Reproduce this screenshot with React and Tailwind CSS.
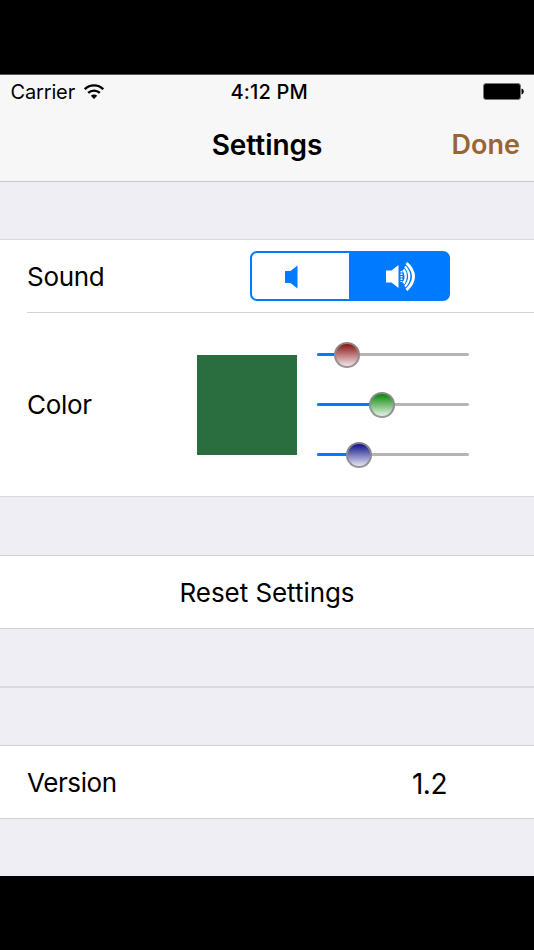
import { useState } from "react";

const CHANNELS = [
  { key: "red", from: "#8b1a1a", to: "#f6ecec", value: 30 },
  { key: "green", from: "#0f8a0f", to: "#ecf6ec", value: 65 },
  { key: "blue", from: "#15158c", to: "#ececf8", value: 42 },
];

function WifiIcon() {
  return (
    <svg width="20" height="15" viewBox="0 0 20 15" fill="none">
      <path d="M0.800 5.200a13 13 0 0 1 18.400 0" stroke="#000" strokeWidth="2.4" />
      <path d="M4.200 8.900a8.400 8.400 0 0 1 11.600 0" stroke="#000" strokeWidth="2.3" />
      <path d="M10 15L6.800 11.800a4.600 4.600 0 0 1 6.400 0z" fill="#000" />
    </svg>
  );
}

function BatteryIcon() {
  return (
    <svg width="41" height="17" viewBox="0 0 41 17">
      <rect x="0.5" y="0.5" width="37" height="16" rx="2.5" fill="#000" stroke="#777" />
      <path d="M38.500 5.500c3 0.500 3 5.500 0 6z" fill="#000" />
    </svg>
  );
}

function SpeakerIcon() {
  return (
    <svg width="13" height="24" viewBox="0 0 13 24" fill="currentColor">
      <path d="M0 6h5.500L12.500 0.500v23L5.500 18H0z" />
    </svg>
  );
}

function SpeakerWavesIcon() {
  return (
    <svg width="30" height="30" viewBox="0 0 30 30" fill="none" stroke="currentColor">
      <path d="M0 9.500h5.500L12.500 4v23L5.500 21.500H0z" fill="currentColor" stroke="none" />
      <path d="M15.500 10v11" strokeWidth="2" strokeDasharray="1.500 1" />
      <path d="M17.500 8.500q4.500 7 0 14" strokeWidth="2.400" />
      <path d="M19 5.500q8.500 10 0 20" strokeWidth="2.200" />
      <path d="M20.500 2q14 13.500 0 27" strokeWidth="3" />
    </svg>
  );
}

function ColorSlider({ channel, value, onChange }) {
  return (
    <div className="relative flex h-[26px] w-[152px] items-center">
      <div className="h-[3px] w-full rounded-full bg-[#b5b5b5]">
        <div className="h-full rounded-full bg-[#007aff]" style={{ width: value }} />
      </div>
      <div
        className="absolute top-0 size-[26px] rounded-full border-2 border-[#8d8d8d]/90"
        style={{
          left: value - 13,
          backgroundImage: `linear-gradient(${channel.from} 10%, ${channel.to} 95%)`,
          backgroundOrigin: "border-box",
        }}
      />
      <input
        type="range"
        min="13"
        max="139"
        value={value}
        aria-label={channel.key}
        onChange={(e) => onChange(Number(e.target.value))}
        className="absolute inset-0 w-full opacity-0"
      />
    </div>
  );
}

export default function App() {
  const [soundOn, setSoundOn] = useState(true);
  const [values, setValues] = useState(CHANNELS.map((c) => c.value));

  const updateChannel = (index, next) => {
    setValues(values.map((v, i) => (i === index ? next : v)));
  };

  return (
    <div className="flex h-[950px] w-[534px] flex-col overflow-hidden bg-black pt-[74px] pb-[74px] font-['Inter',sans-serif] text-[26px] text-black">
      <div className="flex flex-1 flex-col bg-[#efeef4]">
        {/* status bar + navigation bar */}
        <header className="flex h-[108px] shrink-0 flex-col border-t border-b border-t-[#555] border-b-[#c8c8cc] bg-[#f7f7f8]">
          <div className="grid h-[34px] grid-cols-[1fr_auto_1fr] items-center pr-[10px] pl-[10.5px] text-[20px]">
            <div className="flex items-center gap-[9px]">
              <span className="tracking-[-0.15px]">Carrier</span>
              <div className="pb-[2px]">
                <WifiIcon />
              </div>
            </div>
            <span className="pl-[4px] text-center font-medium tracking-[0.2px]">4:12 PM</span>
            <div className="flex justify-end pb-[2px]">
              <BatteryIcon />
            </div>
          </div>
          <div className="grid h-[72px] grid-cols-[1fr_auto_1fr] items-center pr-[14px] pl-[14px] font-semibold">
            <span />
            <h1 className="pb-px text-[28px] tracking-[-0.05px]">Settings</h1>
            <button type="button" className="justify-self-end pt-px text-[27px] text-[#996633]">
              Done
            </button>
          </div>
        </header>

        <section className="mt-[57px] border-t border-b border-[#d9d9dd] bg-white">
          <div className="ml-[27px] flex h-[73px] items-center justify-between border-b border-[#d3d3d6] pr-[84px]">
            <span className="tracking-[-0.3px]">Sound</span>
            <div className="flex h-[50px] w-[200px] overflow-hidden rounded-[7px] bg-[#007aff] p-[2px]">
              <button
                type="button"
                aria-label="Sound off"
                onClick={() => setSoundOn(false)}
                className={`flex w-[97px] items-center rounded-l-[5px] pt-px pl-[33px] ${soundOn ? "bg-white text-[#007aff]" : "bg-[#007aff] text-white"}`}
              >
                <SpeakerIcon />
              </button>
              <button
                type="button"
                aria-label="Sound on"
                onClick={() => setSoundOn(true)}
                className={`flex flex-1 items-center rounded-r-[5px] pl-[37px] ${soundOn ? "bg-[#007aff] text-white" : "bg-white text-[#007aff]"}`}
              >
                <SpeakerWavesIcon />
              </button>
            </div>
          </div>
          <div className="flex h-[183px] items-center pl-[27px]">
            <span className="w-[170px] tracking-[-0.3px]">Color</span>
            <div className="size-[100px] bg-[#2a6e3f]" />
            <div className="ml-[20px] flex flex-col gap-[24px]">
              {CHANNELS.map((channel, i) => (
                <ColorSlider
                  key={channel.key}
                  channel={channel}
                  value={values[i]}
                  onChange={(next) => updateChannel(i, next)}
                />
              ))}
            </div>
          </div>
        </section>

        <section className="mt-[58px] h-[74px] border-t border-b border-[#d1d1d5] bg-white">
          <button type="button" className="h-full w-full tracking-[-0.05px]">
            Reset Settings
          </button>
        </section>

        <div className="mt-[57px] h-[2px] bg-[#dadade]" />

        <section className="mt-[57px] flex h-[74px] items-center justify-between border-t border-b border-[#d1d1d5] bg-white pr-[87px] pl-[27px]">
          <span className="tracking-[-0.4px]">Version</span>
          <span className="pt-[3px] text-[28px] tracking-[-0.5px]">1.2</span>
        </section>
      </div>
    </div>
  );
}
